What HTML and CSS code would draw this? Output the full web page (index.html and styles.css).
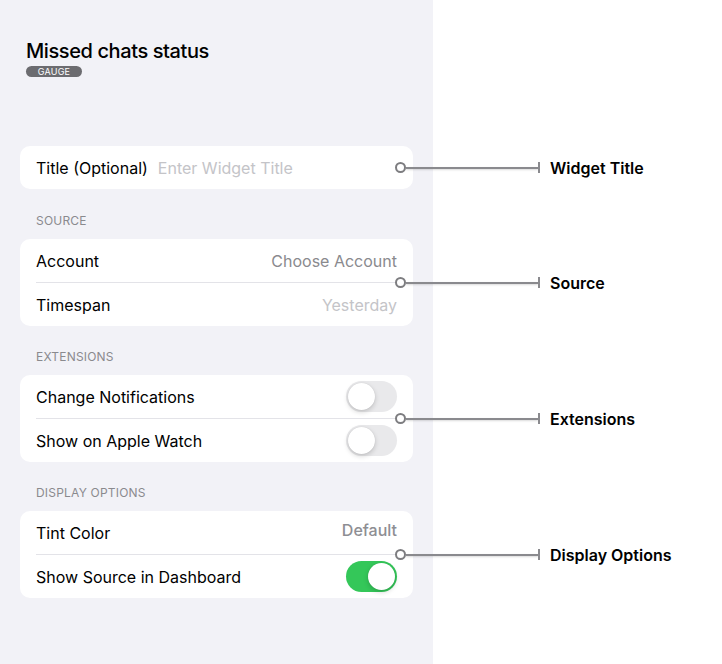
FILE: index.html
```html
<!DOCTYPE html>
<html>
<head>
<meta charset="utf-8">
<link rel="stylesheet" href="styles.css">
</head>
<body>
<div class="page">
  <div class="panel">
    <h1 class="title">Missed chats status</h1>
    <span class="badge">GAUGE</span>

    <div class="card first">
      <div class="row">
        <span class="label">Title (Optional)</span>
        <span class="placeholder">Enter Widget Title</span>
      </div>
      <div class="callout"><span class="dot"></span><span class="line"></span><span class="tick"></span><span class="callout-text">Widget Title</span></div>
    </div>

    <div class="section">SOURCE</div>
    <div class="card">
      <div class="row">
        <span class="label">Account</span>
        <span class="value">Choose Account</span>
      </div>
      <div class="sep"></div>
      <div class="row">
        <span class="label">Timespan</span>
        <span class="value light">Yesterday</span>
      </div>
      <div class="callout"><span class="dot"></span><span class="line"></span><span class="tick"></span><span class="callout-text">Source</span></div>
    </div>

    <div class="section">EXTENSIONS</div>
    <div class="card">
      <div class="row">
        <span class="label">Change Notifications</span>
        <span class="toggle"><span class="knob"></span></span>
      </div>
      <div class="sep"></div>
      <div class="row">
        <span class="label">Show on Apple Watch</span>
        <span class="toggle"><span class="knob"></span></span>
      </div>
      <div class="callout"><span class="dot"></span><span class="line"></span><span class="tick"></span><span class="callout-text">Extensions</span></div>
    </div>

    <div class="section">DISPLAY OPTIONS</div>
    <div class="card">
      <div class="row">
        <span class="label">Tint Color</span>
        <span class="value strong">Default</span>
      </div>
      <div class="sep"></div>
      <div class="row">
        <span class="label">Show Source in Dashboard</span>
        <span class="toggle on"><span class="knob"></span></span>
      </div>
      <div class="callout"><span class="dot"></span><span class="line"></span><span class="tick"></span><span class="callout-text">Display Options</span></div>
    </div>
  </div>
</div>
</body>
</html>
```
FILE: styles.css
```css
* { box-sizing: border-box; }
html, body { margin: 0; padding: 0; background: #ffffff; }
body {
  font-family: Inter, "Liberation Sans", Arial, sans-serif;
  color: #000;
  -webkit-font-smoothing: antialiased;
}
.page {
  width: 722px;
  height: 664px;
  position: relative;
  overflow: hidden;
}
.panel {
  width: 433px;
  height: 664px;
  background: #f2f2f7;
  padding: 39px 20px 0 20px;
  display: flex;
  flex-direction: column;
  align-items: flex-start;
}
.title {
  margin: 0 0 0 6px;
  font-size: 20px;
  line-height: 24px;
  font-weight: 500;
  letter-spacing: -0.4px;
}
.badge {
  margin: 3px 0 0 6px;
  width: 56px;
  height: 11px;
  border-radius: 6px;
  background: #6c6c70;
  color: #fff;
  font-size: 9px;
  line-height: 11px;
  text-align: center;
  letter-spacing: 0.2px;
}
.card {
  position: relative;
  width: 393px;
  background: #fff;
  border-radius: 10px;
  display: flex;
  flex-direction: column;
}
.card.first { margin-top: 69px; }
.row {
  height: 43px;
  display: flex;
  align-items: center;
  padding: 0 16px;
  font-size: 16px;
}
.label { color: #000; }
.placeholder { color: #c4c4c8; margin-left: 10px; }
.value { margin-left: auto; color: #8a8a8e; }
.value.light { color: #c4c4c8; }
.value.strong { font-weight: 500; color: #8e8e93; margin-bottom: 5px; }
.sep {
  height: 1px;
  margin-left: 16px;
  background: #e3e3e8;
}
.section {
  margin: 23px 0 10px 16px;
  font-size: 12px;
  line-height: 16px;
  color: #8a8a8e;
  letter-spacing: 0.2px;
}
.card.first + .section { margin-top: 24px; }
.toggle {
  margin-left: auto;
  width: 51px;
  height: 31px;
  border-radius: 16px;
  background: #e9e9eb;
  position: relative;
}
.knob {
  position: absolute;
  top: 2px;
  left: 2px;
  width: 27px;
  height: 27px;
  border-radius: 50%;
  background: #fff;
  box-shadow: 0 2px 5px rgba(0,0,0,0.18), 0 0 1px rgba(0,0,0,0.12);
}
.toggle.on { background: #34c759; }
.toggle.on .knob { left: 22px; }
.callout {
  position: absolute;
  left: 375px;
  top: 50%;
  transform: translateY(-50%);
  display: flex;
  align-items: center;
  white-space: nowrap;
}
.dot {
  width: 11px;
  height: 11px;
  border-radius: 50%;
  border: 2px solid #7d7d80;
  background: #fff;
  flex: none;
}
.line {
  width: 132px;
  height: 2px;
  background: #8a8a8e;
  box-shadow: 0 1px 2px rgba(0,0,0,0.15);
  flex: none;
}
.tick {
  width: 2px;
  height: 11px;
  background: #8a8a8e;
  flex: none;
}
.callout-text {
  margin-left: 10px;
  font-size: 16px;
  font-weight: 600;
  color: #000;
}
```
